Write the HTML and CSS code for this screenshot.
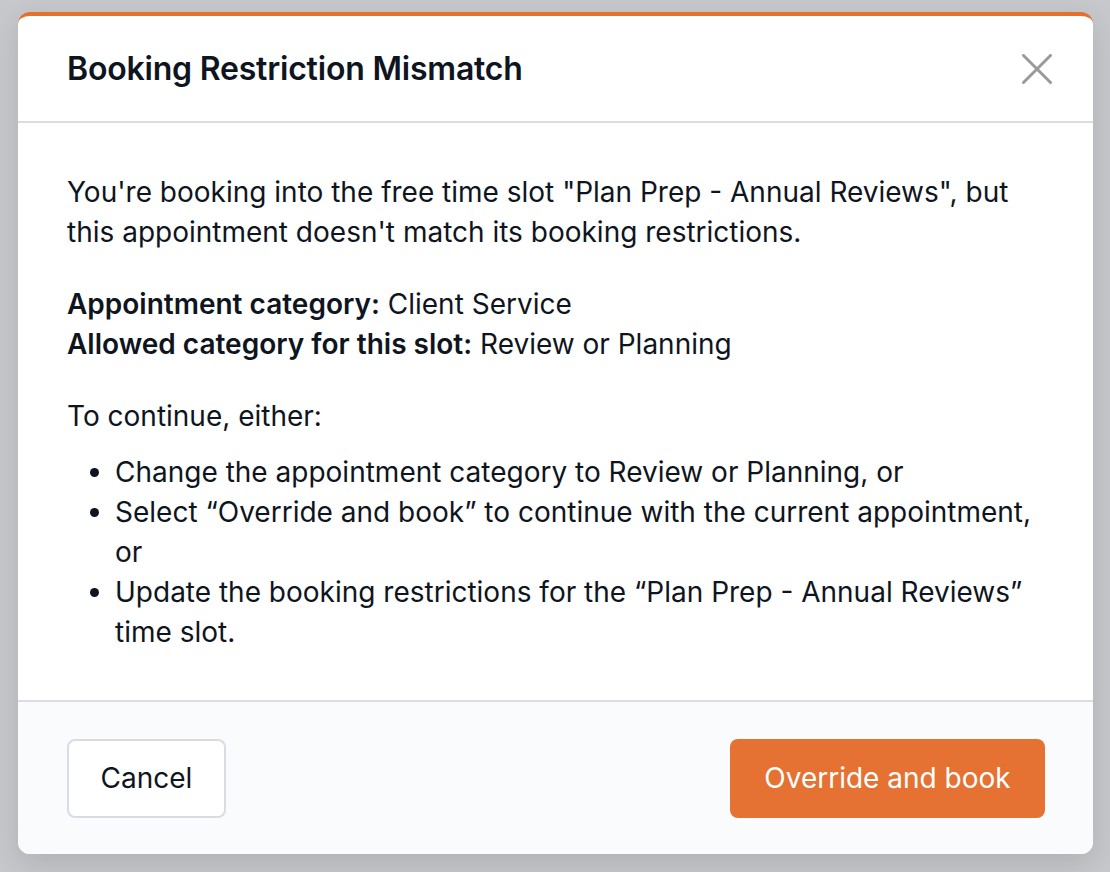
FILE: index.html
```html
<!DOCTYPE html>
<html lang="en">
<head>
    <title>Booking Restriction Mismatch</title>
    <meta name="viewport" content="width=device-width, initial-scale=1" />
    <meta http-equiv="content-type" content="text/html; charset=utf-8" />
    <link rel="stylesheet" href="styles.css">
</head>
<body>
    <div class="backdrop">
        <div class="modal">
            <div class="modal-hdr">
                <div class="modal-title">Booking Restriction Mismatch</div>
                <button class="close-btn" aria-label="Close">
                    <svg width="30" height="30" viewBox="0 0 30 30">
                        <path d="M1.5 1.5 L28.5 28.5 M28.5 1.5 L1.5 28.5" stroke="#9a9a9a" stroke-width="3" stroke-linecap="round" fill="none" />
                    </svg>
                </button>
            </div>

            <div class="modal-body">
                <p>You're booking into the free time slot "Plan Prep - Annual Reviews", but this appointment doesn't match its booking restrictions.</p>
                <p>
                    <b>Appointment category:</b> Client Service<br>
                    <b>Allowed category for this slot:</b> Review or Planning
                </p>
                <p class="lead">To continue, either:</p>
                <ul>
                    <li>Change the appointment category to Review or Planning, or</li>
                    <li>Select &ldquo;Override and book&rdquo; to continue with the current appointment, or</li>
                    <li>Update the booking restrictions for the &ldquo;Plan Prep - Annual Reviews&rdquo; time slot.</li>
                </ul>
            </div>

            <div class="modal-ftr">
                <button class="btn btn-cancel">Cancel</button>
                <button class="btn btn-primary">Override and book</button>
            </div>
        </div>
    </div>
</body>
</html>
```

FILE: styles.css
```css
html, body {
    margin: 0;
    padding: 0;
}

body {
    font-family: Inter, "Noto Sans", sans-serif;
    color: #0f1520;
    background-color: #c7c8cc;
}

.backdrop {
    width: 1110px;
    height: 872px;
    box-sizing: border-box;
    padding: 12px 17px 0 18px;
    background-color: #c7c8cc;
}

.modal {
    width: 1075px;
    background-color: #fff;
    border-top: 4px solid #e46f2f;
    border-radius: 12px;
    overflow: hidden;
    box-shadow: 0 10px 30px rgba(0, 0, 0, 0.12);
}

.modal-hdr {
    height: 107px;
    box-sizing: border-box;
    padding: 0 40px 0 49px;
    display: flex;
    align-items: center;
    justify-content: space-between;
    border-bottom: 2px solid #dcdde2;
}

.modal-title {
    font-size: 32px;
    font-weight: 600;
    letter-spacing: -0.2px;
}

.close-btn {
    border: none;
    background: none;
    padding: 0;
    width: 30px;
    height: 30px;
    margin-right: 1px;
    cursor: pointer;
}

.modal-body {
    padding: 49px 49px 48px 49px;
    font-size: 28px;
    line-height: 40px;
}

.modal-body p {
    margin: 0 0 32px 0;
}

.modal-body p.lead {
    margin-bottom: 16px;
}

.modal-body b {
    font-weight: 600;
}

.modal-body ul {
    margin: 0;
    padding-left: 48px;
}

.modal-ftr {
    height: 154px;
    box-sizing: border-box;
    padding: 0 48px 0 49px;
    display: flex;
    align-items: center;
    justify-content: space-between;
    background-color: #fafbfd;
    border-top: 2px solid #dcdde2;
}

.btn {
    font-family: Inter, "Noto Sans", sans-serif;
    font-size: 28px;
    height: 79px;
    padding: 0;
    border-radius: 8px;
    cursor: pointer;
}

.btn-cancel {
    background-color: #fff;
    color: #0f1520;
    border: 2px solid #d9dce2;
    width: 159px;
}

.btn-primary {
    background-color: #e57232;
    color: #fff;
    border: none;
    width: 315px;
}
```
